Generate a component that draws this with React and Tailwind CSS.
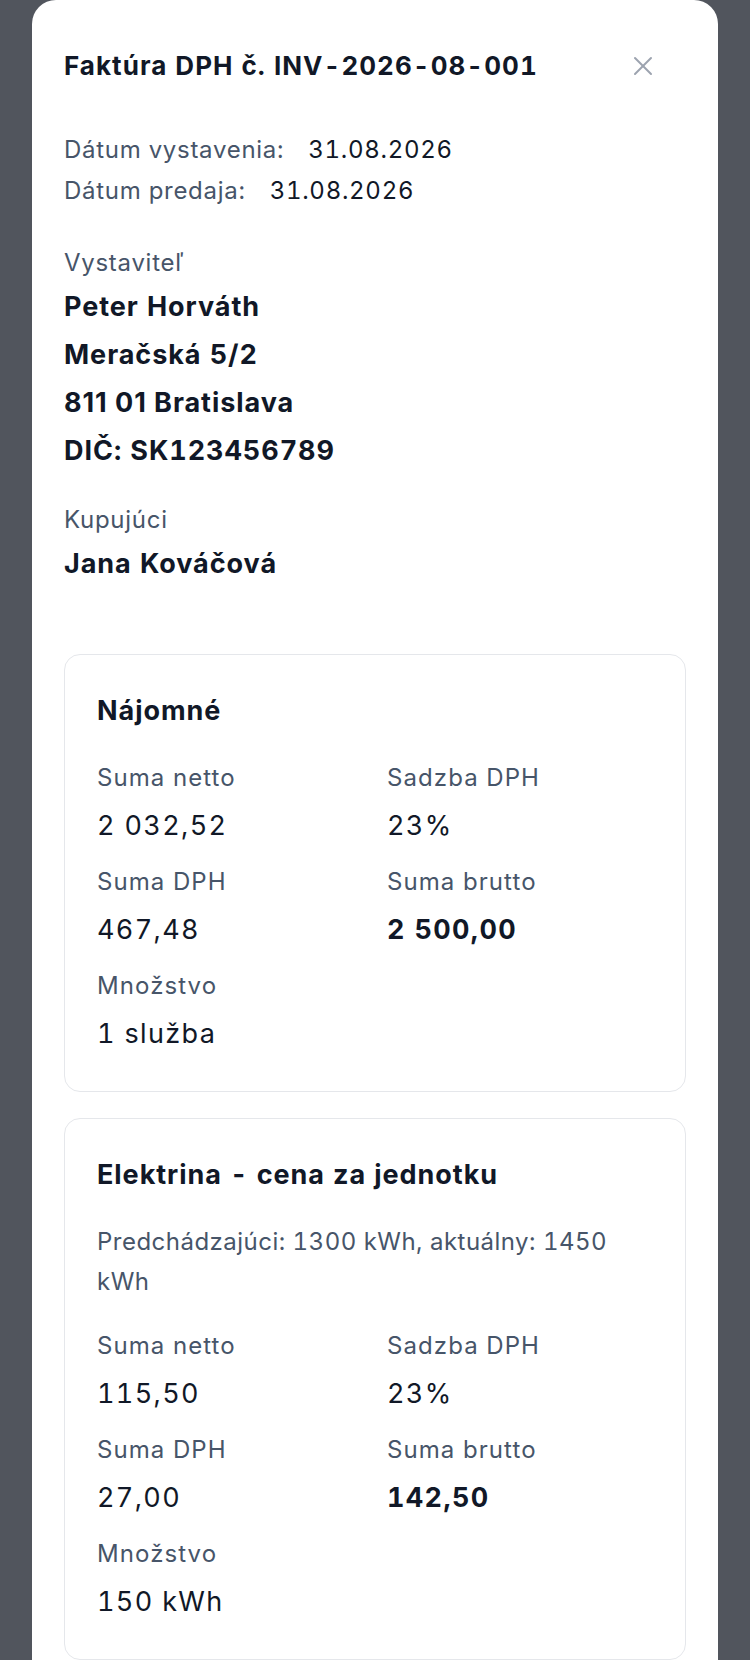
import { X } from 'lucide-react';

const items = [
    {
        title: 'Nájomné',
        note: null,
        netto: '2 032,52',
        rate: '23%',
        dph: '467,48',
        brutto: '2 500,00',
        qty: '1 služba',
    },
    {
        title: 'Elektrina - cena za jednotku',
        note: 'Predchádzajúci: 1300 kWh, aktuálny: 1450 kWh',
        netto: '115,50',
        rate: '23%',
        dph: '27,00',
        brutto: '142,50',
        qty: '150 kWh',
    },
];

const Field = ({ label, value, bold }) => (
    <div>
        <p className="text-[24px] leading-[40px] tracking-[0.045em] text-[#475569]">{label}</p>
        <p className={`mt-2 text-[27px] leading-[40px] tracking-[0.05em] text-[#111827] ${bold ? 'font-bold' : ''}`}>{value}</p>
    </div>
);

const ItemCard = ({ item }) => (
    <div className="border border-[#e5e7eb] rounded-2xl px-8 pt-8 pb-[37px]">
        <h3 className="text-[27px] leading-[48px] font-bold tracking-[0.035em] text-[#111827] mb-[23px]">{item.title}</h3>
        {item.note && (
            <p className="text-[24px] leading-[40px] tracking-[0.02em] text-[#475569] mb-6">{item.note}</p>
        )}
        <div className="grid grid-cols-2 gap-x-6 gap-y-4">
            <Field label="Suma netto" value={item.netto} />
            <Field label="Sadzba DPH" value={item.rate} />
            <Field label="Suma DPH" value={item.dph} />
            <Field label="Suma brutto" value={item.brutto} bold />
            <Field label="Množstvo" value={item.qty} />
        </div>
    </div>
);

export default function App() {
    return (
        <div
            className="min-h-[1660px] bg-[#51555d] pl-8 overflow-hidden tabular-nums"
            style={{ fontFamily: 'Inter, "Noto Sans", sans-serif' }}
        >
            <div className="w-[686px] bg-white rounded-t-3xl px-8 pt-12 min-h-[1660px]">
                <div className="flex items-center justify-between">
                    <h2 className="text-[26px] leading-[36px] font-bold tracking-[0.04em] text-[#111827]">
                        Faktúra DPH č. INV-2026-08-001
                    </h2>
                    <button className="mr-[27px] text-[#9ca3af]">
                        <X size={32} strokeWidth={1.5} />
                    </button>
                </div>

                <div className="mt-[45px] text-[24px] leading-[41px] tracking-[0.03em]">
                    <p>
                        <span className="text-[#475569]">Dátum vystavenia:</span>
                        <span className="ml-6 text-[#111827]">31.08.2026</span>
                    </p>
                    <p>
                        <span className="text-[#475569]">Dátum predaja:</span>
                        <span className="ml-6 text-[#111827]">31.08.2026</span>
                    </p>
                </div>

                <div className="mt-[31px]">
                    <p className="text-[24px] leading-[41px] tracking-[0.03em] text-[#475569]">Vystaviteľ</p>
                    <div className="text-[27px] leading-[48px] font-bold tracking-[0.035em] text-[#111827]">
                        <p>Peter Horváth</p>
                        <p>Meračská 5/2</p>
                        <p className="normal-nums">811 01 Bratislava</p>
                        <p>DIČ: SK123456789</p>
                    </div>
                </div>

                <div className="mt-6">
                    <p className="text-[24px] leading-[41px] tracking-[0.03em] text-[#475569]">Kupujúci</p>
                    <p className="text-[27px] leading-[48px] font-bold tracking-[0.035em] text-[#111827]">Jana Kováčová</p>
                </div>

                <div className="mt-[66px] space-y-[26px]">
                    {items.map((item, index) => (
                        <ItemCard key={index} item={item} />
                    ))}
                </div>
            </div>
        </div>
    );
}
